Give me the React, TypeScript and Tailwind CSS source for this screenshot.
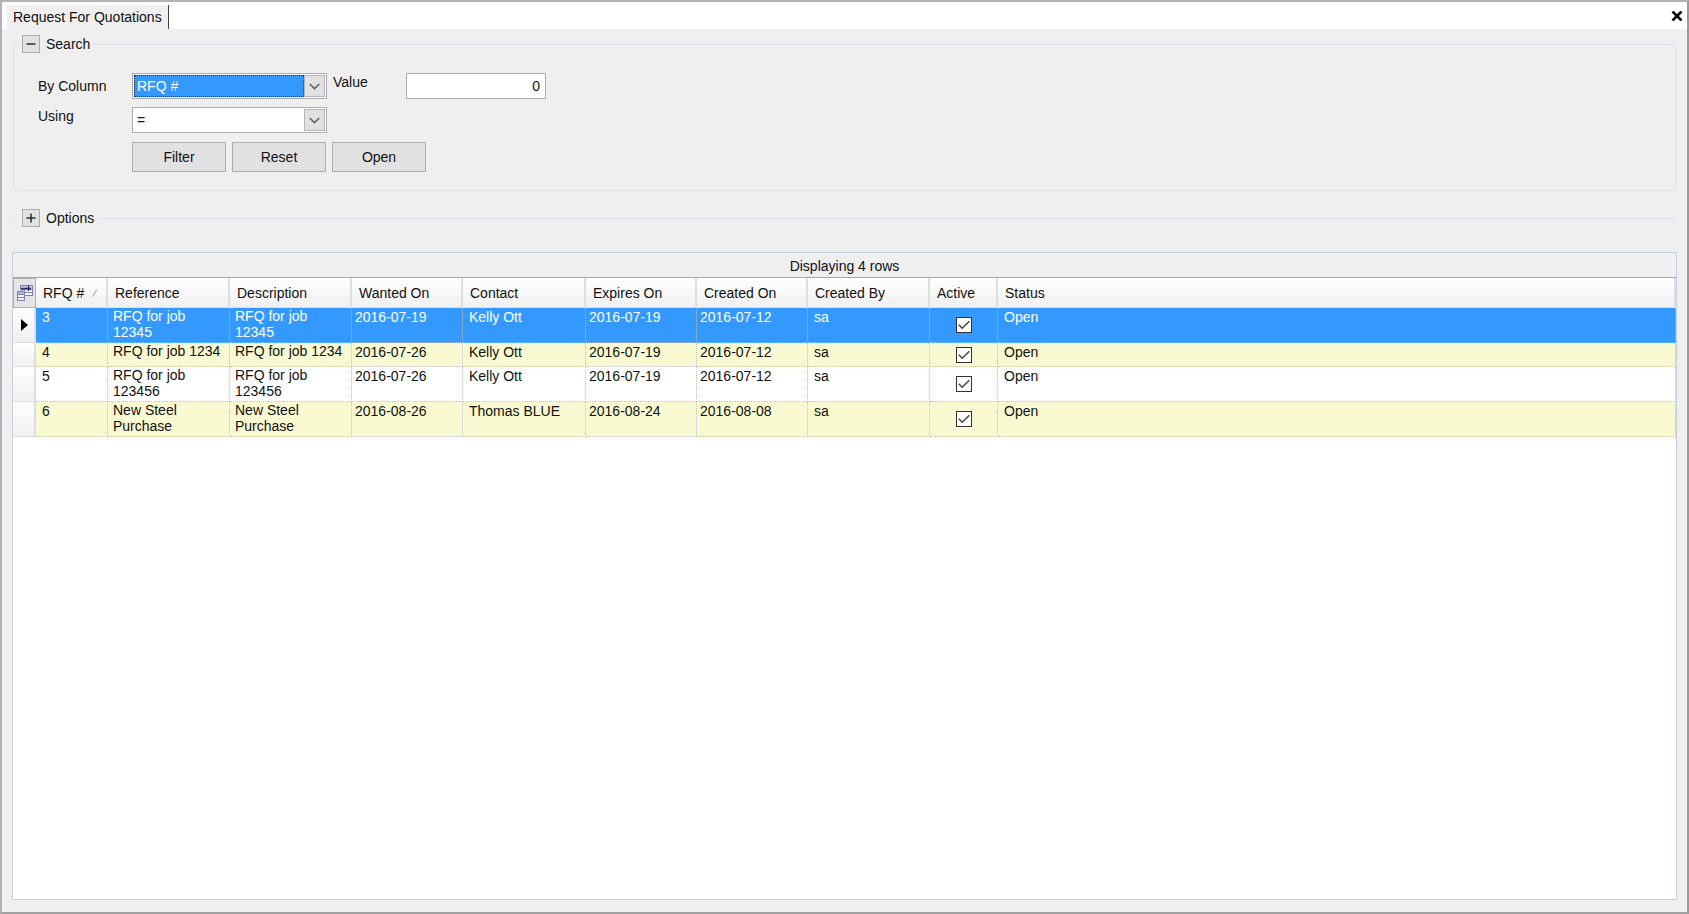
import React, { useState } from 'react';
import clsx from 'clsx';

interface Quotation {
  id: number;
  reference: string;
  description: string;
  wantedOn: string;
  contact: string;
  expiresOn: string;
  createdOn: string;
  createdBy: string;
  active: boolean;
  status: string;
}

const initialQuotations: Quotation[] = [
  { id: 3, reference: 'RFQ for job 12345', description: 'RFQ for job 12345', wantedOn: '2016-07-19', contact: 'Kelly Ott', expiresOn: '2016-07-19', createdOn: '2016-07-12', createdBy: 'sa', active: true, status: 'Open' },
  { id: 4, reference: 'RFQ for job 1234', description: 'RFQ for job 1234', wantedOn: '2016-07-26', contact: 'Kelly Ott', expiresOn: '2016-07-19', createdOn: '2016-07-12', createdBy: 'sa', active: true, status: 'Open' },
  { id: 5, reference: 'RFQ for job 123456', description: 'RFQ for job 123456', wantedOn: '2016-07-26', contact: 'Kelly Ott', expiresOn: '2016-07-19', createdOn: '2016-07-12', createdBy: 'sa', active: true, status: 'Open' },
  { id: 6, reference: 'New Steel Purchase', description: 'New Steel Purchase', wantedOn: '2016-08-26', contact: 'Thomas BLUE', expiresOn: '2016-08-24', createdOn: '2016-08-08', createdBy: 'sa', active: true, status: 'Open' },
];

const columns = [
  { title: 'RFQ #', width: 'w-[72px]' },
  { title: 'Reference', width: 'w-[122px]' },
  { title: 'Description', width: 'w-[122px]' },
  { title: 'Wanted On', width: 'w-[111px]' },
  { title: 'Contact', width: 'w-[123px]' },
  { title: 'Expires On', width: 'w-[111px]' },
  { title: 'Created On', width: 'w-[111px]' },
  { title: 'Created By', width: 'w-[122px]' },
  { title: 'Active', width: 'w-[68px]' },
  { title: 'Status', width: '' },
];

interface GroupLegendProps {
  title: string;
  open: boolean;
  onToggle: () => void;
}

const GroupLegend: React.FC<GroupLegendProps> = ({ title, open, onToggle }) => (
  <legend className="ml-1 px-1">
    <span className="flex items-center gap-1.5 leading-[18px]">
      <button
        type="button"
        aria-label={`Toggle ${title}`}
        aria-expanded={open}
        onClick={onToggle}
        className="flex size-[18px] items-center justify-center border border-[#adadad] bg-[#e1e1e1]"
      >
        <svg width="10" height="10" viewBox="0 0 10 10" stroke="#222" strokeWidth="1.4">
          <path d="M0.5 5H9.5" />
          {!open && <path d="M5 0.5V9.5" />}
        </svg>
      </button>
      {title}
    </span>
  </legend>
);

interface ComboBoxProps {
  id: string;
  options: string[];
  highlighted?: boolean;
}

const ComboBox: React.FC<ComboBoxProps> = ({ id, options, highlighted }) => (
  <div className="flex h-[26px] border border-[#abadb3] bg-white p-px">
    <select
      id={id}
      className={clsx(
        'min-w-0 flex-1 appearance-none border border-dotted pl-0.5 outline-none',
        highlighted ? 'border-[#10305a] bg-[#3399ff] text-white' : 'border-transparent bg-white'
      )}
    >
      {options.map((option) => (
        <option key={option}>{option}</option>
      ))}
    </select>
    <span className="pointer-events-none flex w-[21px] items-center justify-center border border-[#b4b4b8] bg-[#e1e1e1]">
      <svg width="11" height="7" viewBox="0 0 11 7" fill="none" stroke="#606060" strokeWidth="1.5">
        <path d="M0.7 1L5.5 5.6L10.3 1" />
      </svg>
    </span>
  </div>
);

interface CheckCellProps {
  checked: boolean;
  label: string;
  onChange: () => void;
}

const CheckCell: React.FC<CheckCellProps> = ({ checked, label, onChange }) => (
  <label className="mx-auto grid size-4 place-items-center">
    <input
      type="checkbox"
      aria-label={label}
      checked={checked}
      onChange={onChange}
      className="col-start-1 row-start-1 size-4 appearance-none border border-[#333] bg-white"
    />
    {checked && (
      <svg
        className="pointer-events-none col-start-1 row-start-1"
        width="12"
        height="10"
        viewBox="0 0 12 10"
        fill="none"
        stroke="#444"
        strokeWidth="1.5"
      >
        <path d="M0.8 4.8L4.2 8.2L11.3 1.2" />
      </svg>
    )}
  </label>
);

const ColumnChooserIcon: React.FC = () => (
  <svg width="18" height="20" viewBox="0 0 18 20">
    <g fill="#f4f4fb" stroke="#8080b4">
      <rect x="4.5" y="2.5" width="12" height="4" fill="#c9c9e6" />
      <rect x="8.5" y="6.5" width="8" height="3" />
      <rect x="8.5" y="9.5" width="8" height="3" />
      <rect x="1.5" y="8.5" width="7" height="3" fill="#b4b4dc" />
      <rect x="1.5" y="11.5" width="7" height="3" />
      <rect x="1.5" y="14.5" width="7" height="3" />
    </g>
    <path d="M6 7.5V5.5H12M9.5 5.5H15M12.5 2.5V8" fill="none" stroke="#2c2c6c" strokeWidth="1.3" />
  </svg>
);

const App: React.FC = () => {
  const [searchOpen, setSearchOpen] = useState(true);
  const [optionsOpen, setOptionsOpen] = useState(false);
  const [quotations, setQuotations] = useState(initialQuotations);
  const [selectedId, setSelectedId] = useState(3);
  const [value, setValue] = useState('0');

  const toggleActive = (id: number) => {
    setQuotations((rows) => rows.map((row) => (row.id === id ? { ...row, active: !row.active } : row)));
  };

  const buttonClass = 'h-[30px] w-[94px] border border-[#adadad] bg-[#e1e1e1] hover:bg-[#e5f1fb]';

  return (
    <div className="flex min-h-screen flex-col border-2 border-[#b2b2b2] border-r-[#9a9a9a] border-b-[#a2a2a2] bg-[#efefef] font-['Liberation_Sans',Arial,sans-serif] text-sm text-[#111]">
      <header className="flex h-[27px] items-center justify-between bg-white pr-1 pl-[5px]">
        <div className="mt-[3px] h-6 border-r border-[#444] bg-[#efefef] px-1.5 leading-6">Request For Quotations</div>
        <button type="button" aria-label="Close">
          <svg width="12" height="10" viewBox="0 0 12 10" stroke="#000" strokeWidth="2.6">
            <path d="M1.5 0.5L10.5 9.5M10.5 0.5L1.5 9.5" />
          </svg>
        </button>
      </header>

      <main className="flex flex-1 flex-col px-2.5 pt-1.5 pb-3">
        <fieldset className="mx-px rounded-[5px] border border-[#d9e2ea]">
          <GroupLegend title="Search" open={searchOpen} onToggle={() => setSearchOpen(!searchOpen)} />
          {searchOpen && (
            <div className="px-6 pt-5 pb-[18px]">
              <div className="grid grid-cols-[94px_195px_79px_140px] gap-y-2">
                <label htmlFor="column" className="self-center">By Column</label>
                <ComboBox id="column" options={['RFQ #', 'Reference', 'Description', 'Contact', 'Status']} highlighted />
                <label htmlFor="value" className="pl-1.5 leading-[18px]">Value</label>
                <input
                  id="value"
                  type="text"
                  value={value}
                  onChange={(e) => setValue(e.target.value)}
                  className="h-[26px] border border-[#abadb3] bg-white px-[5px] text-right outline-none"
                />
                <label htmlFor="using" className="leading-[18px]">Using</label>
                <ComboBox id="using" options={['=', '<', '>', '<>']} />
              </div>
              <div className="mt-[9px] ml-[94px] flex gap-1.5">
                <button type="button" className={buttonClass}>Filter</button>
                <button type="button" className={buttonClass} onClick={() => setValue('0')}>Reset</button>
                <button type="button" className={buttonClass}>Open</button>
              </div>
            </div>
          )}
        </fieldset>

        <fieldset className="mx-px mt-[18px] border-x border-t border-x-transparent border-t-[#d9e2ea]">
          <GroupLegend title="Options" open={optionsOpen} onToggle={() => setOptionsOpen(!optionsOpen)} />
        </fieldset>

        <section className="mt-[25px] flex-1 border border-[#c3d0df] bg-white">
          <table className="w-full table-fixed border-separate border-spacing-0 text-left leading-4">
            <caption className="h-[25px] border-b border-[#a8a8a8] bg-[#efefef] leading-[26px]">
              Displaying {quotations.length} rows
            </caption>
            <thead>
              <tr className="h-[30px]">
                <th className="w-[23px] border border-[#b0b0b0] bg-[#e4e4e4] p-0">
                  <button type="button" aria-label="Choose columns" className="flex w-full justify-center">
                    <ColumnChooserIcon />
                  </button>
                </th>
                {columns.map((column) => (
                  <th
                    key={column.title}
                    scope="col"
                    className={clsx(
                      'border-r-2 border-b border-[#dcdfe0] bg-linear-to-b from-white to-[#f0f0f0] py-0 pr-0 pl-[7px] font-normal',
                      column.width
                    )}
                  >
                    <span className="flex items-center gap-2">
                      {column.title}
                      {column.title === 'RFQ #' && (
                        <svg width="6" height="8" viewBox="0 0 6 8" stroke="#999">
                          <path d="M0.5 7.5L5 0.5" />
                        </svg>
                      )}
                    </span>
                  </th>
                ))}
              </tr>
            </thead>
            <tbody>
              {quotations.map((row, index) => {
                const selected = row.id === selectedId;
                const line = clsx('border-r border-b border-dotted', selected ? 'border-[#9cc4ee]' : 'border-[#c4c4c4]');
                const cell = clsx(line, 'pt-px pr-0 pb-0 pl-[6px] align-top');
                const dateCell = clsx(line, 'pt-px pr-0 pb-0 pl-[3px] align-top');
                const wrapCell = clsx(line, 'pt-0 pr-1 pb-0.5 pl-[5px] align-top');

                return (
                  <tr
                    key={row.id}
                    onClick={() => setSelectedId(row.id)}
                    className={clsx(
                      'h-6',
                      selected ? 'bg-[#3399ff] text-white' : index % 2 === 1 ? 'bg-[#fafad2]' : 'bg-white'
                    )}
                  >
                    <td className="border-r-2 border-b border-[#dcdfe0] bg-linear-to-b from-white to-[#f0f0f0] p-0">
                      {selected && (
                        <svg className="ml-2" width="7" height="12" viewBox="0 0 7 12">
                          <path d="M0 0L7 6L0 12Z" fill="#000" />
                        </svg>
                      )}
                    </td>
                    <td className={cell}>{row.id}</td>
                    <td className={wrapCell}>{row.reference}</td>
                    <td className={wrapCell}>{row.description}</td>
                    <td className={dateCell}>{row.wantedOn}</td>
                    <td className={cell}>{row.contact}</td>
                    <td className={dateCell}>{row.expiresOn}</td>
                    <td className={dateCell}>{row.createdOn}</td>
                    <td className={cell}>{row.createdBy}</td>
                    <td className={clsx(line, 'p-0 align-middle')}>
                      <CheckCell
                        checked={row.active}
                        label={`RFQ ${row.id} active`}
                        onChange={() => toggleActive(row.id)}
                      />
                    </td>
                    <td className={cell}>{row.status}</td>
                  </tr>
                );
              })}
            </tbody>
          </table>
        </section>
      </main>
    </div>
  );
};

export default App;
